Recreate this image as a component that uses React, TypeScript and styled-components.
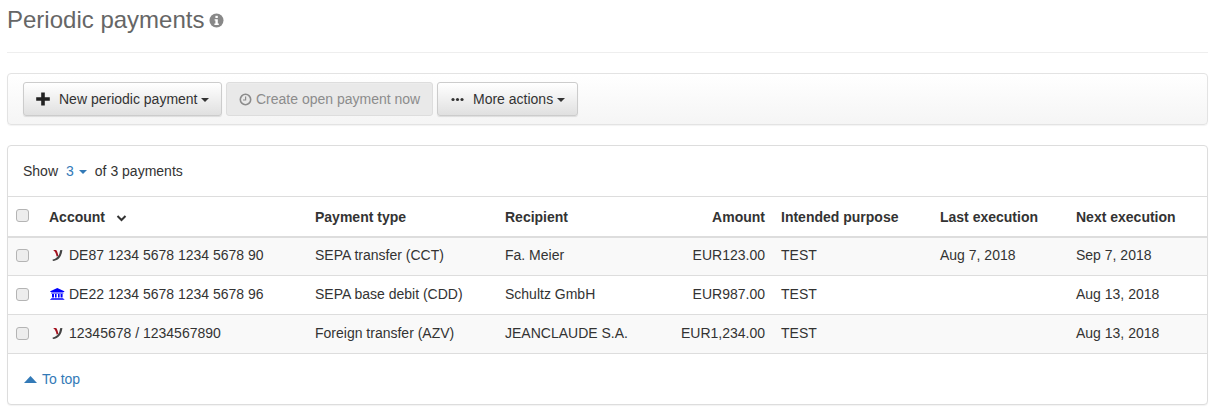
import React from "react";
import styled, { createGlobalStyle } from "styled-components";

const Global = createGlobalStyle`
  html, body { margin: 0; padding: 0; background: #fff; }
  body { font-family: "Liberation Sans", Arial, sans-serif; font-size: 14px; line-height: 20px; color: #333; }
  * { box-sizing: border-box; }
`;
const Page = styled.div`
  width: 1214px;
  height: 412px;
  overflow: hidden;
  padding: 0 6px 0 7px;
`;
const Header = styled.div`
  height: 53px;
  border-bottom: 1px solid #eee;
  margin-bottom: 20px;
  padding-top: 5px;
`;
const Title = styled.h1`
  margin: 0;
  display: flex;
  align-items: center;
  gap: 5px;
  font-size: 24px;
  line-height: 29px;
  font-weight: 400;
  color: #666;
`;
const InfoIcon = styled.svg`
  width: 15px;
  height: 15px;
  margin-top: 2px;
`;
const Toolbar = styled.div`
  height: 52px;
  border: 1px solid #e3e3e3;
  border-radius: 4px;
  background: linear-gradient(to bottom, #fff 0%, #f5f5f5 100%);
  box-shadow: 0 1px 1px rgba(0, 0, 0, 0.05);
  padding: 8px 15px;
  display: flex;
  gap: 4px;
  margin-bottom: 20px;
`;
const Button = styled.button<{ $disabled?: boolean; $width: number; $pad: number }>`
  width: ${(p) => p.$width}px;
  height: 34px;
  padding: 0 0 0 ${(p) => p.$pad}px;
  border: 1px solid ${(p) => (p.$disabled ? "#ddd" : "#ccc")};
  border-radius: 3px;
  font: inherit;
  color: ${(p) => (p.$disabled ? "#8c8c8c" : "#333")};
  background: ${(p) => (p.$disabled ? "#e9e9e9" : "linear-gradient(to bottom, #fff 0%, #e0e0e0 100%)")};
  box-shadow: ${(p) => (p.$disabled ? "inset 0 1px 0 rgba(255,255,255,.15)" : "0 1px 1px rgba(0,0,0,.1)")};
  display: flex;
  align-items: center;
  white-space: nowrap;
`;
const Caret = styled.span<{ $color?: string; $gap?: number }>`
  display: inline-block;
  width: 0;
  height: 0;
  margin-left: ${(p) => p.$gap ?? 3}px;
  margin-top: 1px;
  border-top: 4px solid ${(p) => p.$color ?? "#333"};
  border-left: 4px solid transparent;
  border-right: 4px solid transparent;
`;
const BtnIcon = styled.svg<{ $gap: number }>`
  margin-right: ${(p) => p.$gap}px;
  flex: none;
`;
const Panel = styled.div`
  height: 260px;
  border: 1px solid #ddd;
  border-radius: 4px;
  box-shadow: 0 1px 1px rgba(0, 0, 0, 0.05);
  background: #fff;
  overflow: hidden;
`;
const ShowBar = styled.div`
  height: 50px;
  padding: 15px 15px 0;
  display: flex;
  align-items: flex-start;
`;
const ShowLink = styled.span`
  color: #337ab7;
  margin: 0 8px;
  display: inline-flex;
  align-items: center;
`;
const Table = styled.table`
  width: 100%;
  table-layout: fixed;
  border-collapse: collapse;
  border-top: 1px solid #ddd;
`;
const Th = styled.th<{ $w: number; $right?: boolean }>`
  width: ${(p) => p.$w}px;
  height: 40px;
  padding: 2px 8px 0;
  border-bottom: 2px solid #ddd;
  text-align: ${(p) => (p.$right ? "right" : "left")};
  font-weight: 700;
  white-space: nowrap;
`;
const Row = styled.tr<{ $odd?: boolean }>`
  background: ${(p) => (p.$odd ? "#f9f9f9" : "#fff")};
`;
const Td = styled.td<{ $right?: boolean }>`
  height: 39px;
  padding: 0 8px 2px;
  border-bottom: 1px solid #ddd;
  text-align: ${(p) => (p.$right ? "right" : "left")};
  white-space: nowrap;
`;
const Check = styled.span<{ $lift?: number }>`
  display: block;
  width: 13px;
  height: 13px;
  margin: -${(p) => p.$lift ?? 0}px 0 0;
  border: 1px solid #b4b4b4;
  border-radius: 3px;
  background: #ededed;
`;
const AccountCell = styled.span`
  display: flex;
  align-items: center;
  gap: 4px;
`;
const SortIcon = styled.svg`
  margin-left: 11px;
  vertical-align: -1px;
`;
const Footer = styled.div`
  padding: 15px 15px 0 16px;
  display: flex;
  align-items: center;
  gap: 5px;
  color: #337ab7;
`;

const BrandMark = () => (
  <svg width="16" height="14" viewBox="0 0 16 14">
    <path d="M4.5 2 L7.2 2 C8.4 3.5 9 5.5 9.4 8 L7.6 8.4 C7 5.6 6 3.4 4.5 2.6 Z" fill="#a3121f" />
    <path d="M13.4 2 L11 2.2 C10.8 6 9.6 9.8 3.4 11.8 L4 13 C9.6 12.6 12.6 8.6 13.4 2 Z" fill="#444" />
  </svg>
);
const BankMark = () => (
  <svg width="16" height="14" viewBox="0 0 16 14">
    <path
      fill="#0000ff"
      d="M8.3 1 L15.3 4.2 V5 H1.3 V4.2 Z M2.2 5.6 H14.4 V6.4 H2.2 Z M3 7 H5 V10.6 H3 Z M6 7 H7.6 V10.6 H6 Z M9 7 H10.6 V10.6 H9 Z M11.6 7 H13.6 V10.6 H11.6 Z M2.2 11 H14.4 V11.8 H2.2 Z M1.3 12.2 H15.3 V13 H1.3 Z"
    />
  </svg>
);

type P = { bank?: boolean; account: string; type: string; rec: string; amt: string; last: string; next: string };
const rows: P[] = [
  { account: "DE87 1234 5678 1234 5678 90", type: "SEPA transfer (CCT)", rec: "Fa. Meier", amt: "EUR123.00", last: "Aug 7, 2018", next: "Sep 7, 2018" },
  { bank: true, account: "DE22 1234 5678 1234 5678 96", type: "SEPA base debit (CDD)", rec: "Schultz GmbH", amt: "EUR987.00", last: "", next: "Aug 13, 2018" },
  { account: "12345678 / 1234567890", type: "Foreign transfer (AZV)", rec: "JEANCLAUDE S.A.", amt: "EUR1,234.00", last: "", next: "Aug 13, 2018" },
];

export default function App() {
  return (
    <Page>
      <Global />
      <Header>
        <Title>
          Periodic payments
          <InfoIcon viewBox="0 0 15 15">
            <circle cx="7.5" cy="7.5" r="7" fill="#888" />
            <rect x="6.4" y="2.8" width="2.4" height="2.2" fill="#fff" />
            <path d="M5.6 6.2 H8.8 V10.6 H9.8 V12 H5.4 V10.6 H6.4 V7.6 H5.6 Z" fill="#fff" />
          </InfoIcon>
        </Title>
      </Header>
      <Toolbar>
        <Button $width={199} $pad={12}>
          <BtnIcon $gap={9} width="14" height="14" viewBox="0 0 14 14">
            <path d="M5.2 0.5 H8.8 V5.2 H13.8 V8.8 H8.8 V13.5 H5.2 V8.8 H0.2 V5.2 H5.2 Z" fill="#222" />
          </BtnIcon>
          New periodic payment
          <Caret />
        </Button>
        <Button $width={207} $pad={12} $disabled>
          <BtnIcon $gap={4} width="13" height="13" viewBox="0 0 13 13">
            <circle cx="6.5" cy="6.5" r="5.2" fill="none" stroke="#8c8c8c" strokeWidth="1.6" />
            <path d="M6.6 3.4 V7 H4" fill="none" stroke="#8c8c8c" strokeWidth="1.2" />
          </BtnIcon>
          Create open payment now
        </Button>
        <Button $width={141} $pad={13}>
          <BtnIcon $gap={9} width="13" height="13" viewBox="0 0 13 13">
            <circle cx="2" cy="6.5" r="1.6" fill="#333" />
            <circle cx="6.5" cy="6.5" r="1.6" fill="#333" />
            <circle cx="11" cy="6.5" r="1.6" fill="#333" />
          </BtnIcon>
          More actions
          <Caret $gap={4} />
        </Button>
      </Toolbar>
      <Panel>
        <ShowBar>
          Show
          <ShowLink>
            3
            <Caret $color="#337ab7" $gap={5} />
          </ShowLink>
          of 3 payments
        </ShowBar>
        <Table>
          <thead>
            <tr>
              <Th $w={33}>
                <Check $lift={4} />
              </Th>
              <Th $w={266}>
                Account
                <SortIcon width="11" height="9" viewBox="0 0 11 9">
                  <path d="M1.5 2 L5.5 6 L9.5 2" fill="none" stroke="#333" strokeWidth="2" />
                </SortIcon>
              </Th>
              <Th $w={190}>Payment type</Th>
              <Th $w={176}>Recipient</Th>
              <Th $w={100} $right>Amount</Th>
              <Th $w={159}>Intended purpose</Th>
              <Th $w={136}>Last execution</Th>
              <Th $w={139}>Next execution</Th>
            </tr>
          </thead>
          <tbody>
            {rows.map((r, i) => (
              <Row key={r.account} $odd={i % 2 === 0}>
                <Td>
                  <Check />
                </Td>
                <Td>
                  <AccountCell>
                    {r.bank ? <BankMark /> : <BrandMark />}
                    {r.account}
                  </AccountCell>
                </Td>
                <Td>{r.type}</Td>
                <Td>{r.rec}</Td>
                <Td $right>{r.amt}</Td>
                <Td>TEST</Td>
                <Td>{r.last}</Td>
                <Td>{r.next}</Td>
              </Row>
            ))}
          </tbody>
        </Table>
        <Footer>
          <svg width="13" height="7" viewBox="0 0 13 7">
            <path d="M6.5 0 L13 7 H0 Z" fill="#337ab7" />
          </svg>
          To top
        </Footer>
      </Panel>
    </Page>
  );
}
